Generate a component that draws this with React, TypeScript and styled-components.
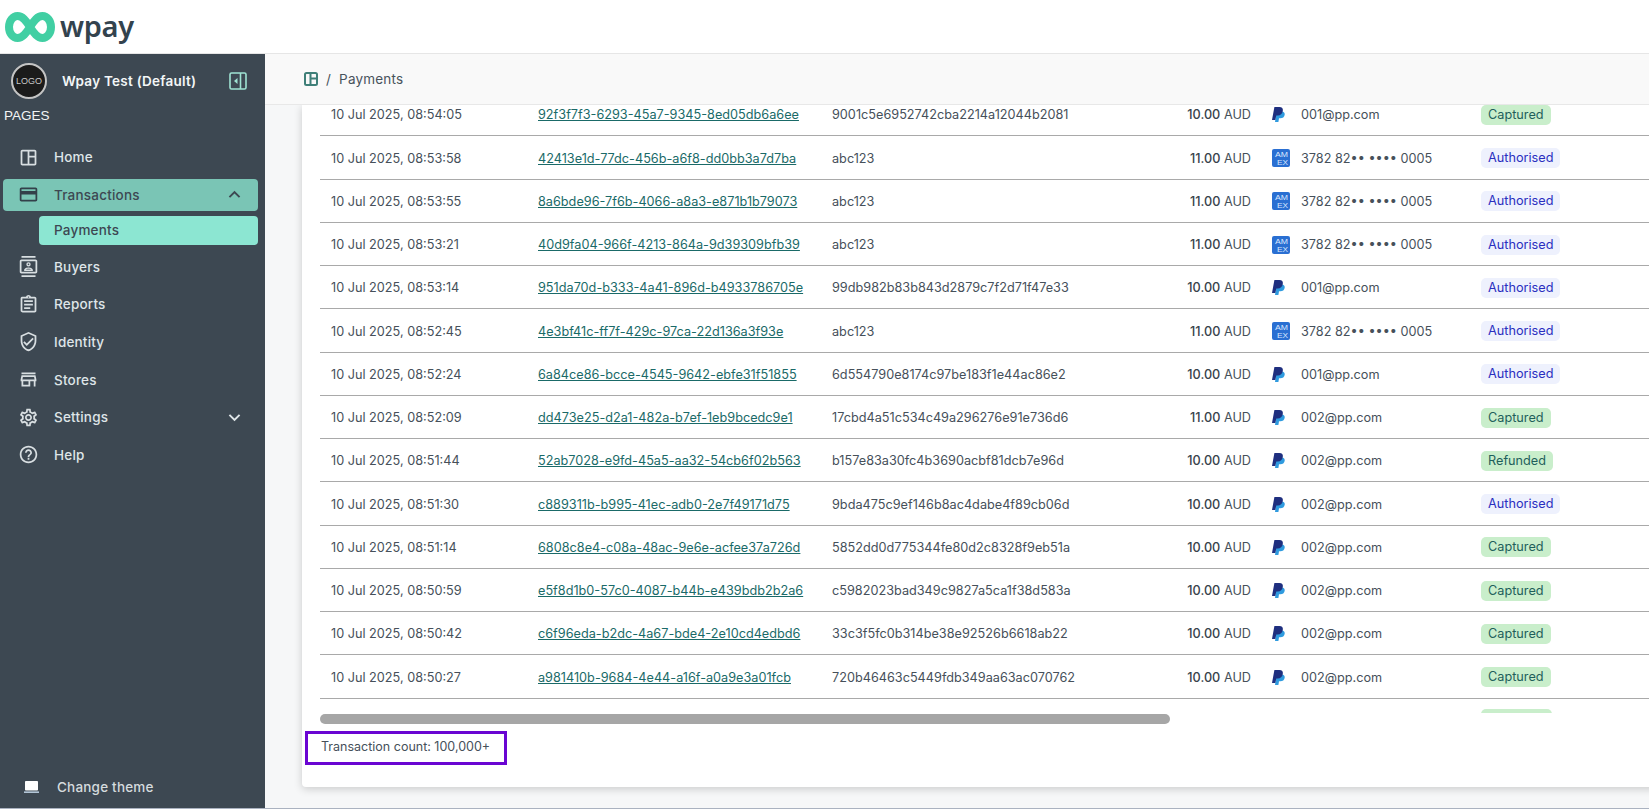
import React from "react";
import styled, { createGlobalStyle } from "styled-components";
import {
  MdOutlineSpaceDashboard,
  MdOutlineCreditCard,
  MdOutlineContacts,
  MdOutlineAssignment,
  MdOutlineVerifiedUser,
  MdOutlineStore,
  MdOutlineSettings,
  MdHelpOutline,
  MdKeyboardArrowUp,
  MdKeyboardArrowDown,
} from "react-icons/md";

const GlobalStyle = createGlobalStyle`
  html, body { margin: 0; padding: 0; height: 100%; overflow: hidden; background: #fff; }
  * { box-sizing: border-box; }
  body { font-family: "Inter", "Liberation Sans", sans-serif; }
`;

const Page = styled.div`
  width: 100vw;
  height: 100vh;
  display: flex;
  flex-direction: column;
  border-bottom: 1px solid #aab2c0;
  overflow: hidden;
`;

const TopBar = styled.header`
  height: 54px;
  flex: none;
  display: flex;
  align-items: center;
  gap: 5px;
  padding: 0 0 0 5px;
  background: #fff;
  border-bottom: 1px solid #e6e6e6;
`;

const Wordmark = styled.span`
  font-family: "Noto Sans", "Inter", sans-serif;
  font-size: 29px;
  font-weight: 600;
  letter-spacing: -0.3px;
  color: #33434e;
  line-height: 1;
  margin-top: -3px;
`;

const Body = styled.div`
  flex: 1;
  display: flex;
  min-height: 0;
`;

const Sidebar = styled.aside`
  width: 265px;
  flex: none;
  display: flex;
  flex-direction: column;
  background: #3d4852;
  padding: 9px 0 0 0;
  color: #dfe5e8;
`;

const Account = styled.div`
  display: flex;
  align-items: center;
  padding: 0 18px 0 11px;
  height: 36px;
`;

const LogoCircle = styled.div`
  width: 36px;
  height: 36px;
  flex: none;
  border-radius: 50%;
  background: #1b1b1b;
  border: 2px solid #c4c4c4;
  color: #c9c9c9;
  font-family: "Liberation Sans", sans-serif;
  font-size: 9px;
  display: flex;
  align-items: center;
  justify-content: center;
`;

const AccountName = styled.div`
  flex: 1;
  margin-left: 15px;
  font-size: 13.5px;
  font-weight: 600;
  letter-spacing: 0.25px;
  color: #f3f6f7;
  white-space: nowrap;
`;

const PagesLabel = styled.div`
  margin: 9px 0 0 4px;
  font-family: "Liberation Sans", sans-serif;
  font-size: 13.5px;
  line-height: 16px;
  color: #f2f4f5;
`;

const Nav = styled.nav`
  display: flex;
  flex-direction: column;
  gap: 5.6px;
  margin-top: 17px;
  padding: 0 7px 0 3px;
`;

const NavItem = styled.div<{ $active?: boolean }>`
  height: 32px;
  display: flex;
  align-items: center;
  padding: 0 17px 0 15px;
  border-radius: 4px;
  font-size: 13.5px;
  font-weight: 500;
  letter-spacing: 0.2px;
  background: ${(p) => (p.$active ? "#7ac5b5" : "transparent")};
  color: ${(p) => (p.$active ? "#3d4852" : "#dfe5e8")};
`;

const NavIcon = styled.span<{ $active?: boolean }>`
  width: 36px;
  flex: none;
  display: flex;
  font-size: 21px;
  color: ${(p) => (p.$active ? "#33404a" : "#d8dee1")};
`;

const NavLabel = styled.span`
  flex: 1;
`;

const Caret = styled.span`
  display: flex;
  font-size: 23px;
  margin-right: -5px;
`;

const SubItem = styled.div`
  height: 29px;
  margin-left: 36px;
  padding: 0 0 1px 15px;
  display: flex;
  align-items: center;
  border-radius: 4px;
  background: #8ce6d2;
  color: #3d4852;
  font-size: 13.5px;
  font-weight: 500;
  letter-spacing: 0.2px;
`;

const ThemeRow = styled.div`
  margin-top: auto;
  height: 42px;
  padding: 0 0 0 24px;
  display: flex;
  align-items: center;
  gap: 18px;
  font-size: 13.5px;
  font-weight: 500;
  letter-spacing: 0.2px;
  color: #d5dbde;
`;

const Main = styled.main`
  flex: 1;
  min-width: 0;
  display: flex;
  flex-direction: column;
  background: #f6f7f8;
  overflow: hidden;
`;

const Breadcrumb = styled.div`
  height: 51px;
  flex: none;
  display: flex;
  align-items: center;
  gap: 8px;
  padding-left: 39px;
  background: #f9f9f9;
  border-bottom: 1px solid #e8e8e8;
  position: relative;
  z-index: 1;
  font-size: 13.5px;
  letter-spacing: 0.2px;
  color: #48535c;
`;

const Card = styled.section`
  width: 1400px;
  height: 682px;
  flex: none;
  margin-left: 37px;
  background: #fff;
  border-radius: 0 0 4px 4px;
  box-shadow: 0 2px 8px rgba(0, 0, 0, 0.18);
`;

const TableViewport = styled.div`
  height: 608px;
  margin-left: 18px;
  overflow: hidden;
`;

const TableScroll = styled.div`
  margin-top: -12px;
`;

const Row = styled.div`
  height: 43.25px;
  padding-top: 1.5px;
  display: grid;
  grid-template-columns: 218px 294px 240px 180px 229px 1fr;
  align-items: center;
  border-bottom: 1px solid #a9a9a9;
  font-size: 12.7px;
  color: #46505a;
  white-space: nowrap;
`;

const LastRow = styled(Row)`
  border-bottom: none;
`;

const DateCell = styled.div`
  padding-left: 11px;
`;

const IdLink = styled.a`
  color: #1a6a68;
  text-decoration: underline;
`;

const Amount = styled.div`
  padding-right: 1px;
  text-align: right;
  color: #46505a;

  b {
    font-weight: 500;
    color: #39434c;
  }
`;

const Method = styled.div`
  display: flex;
  align-items: center;
  padding-left: 20px;
`;

const MethodIcon = styled.span`
  width: 29px;
  flex: none;
  display: flex;
`;

const Badge = styled.span<{ $kind: string }>`
  display: inline-block;
  height: 20px;
  line-height: 20px;
  padding: 0 7px;
  border-radius: 5px;
  background: ${(p) => (p.$kind === "Authorised" ? "#eef1fd" : "#c9eecb")};
  color: ${(p) => (p.$kind === "Authorised" ? "#2a2fc0" : "#1f5f5b")};
`;

const ClippedBadge = styled(Badge)`
  width: 71px;
`;

const ScrollTrack = styled.div`
  height: 10px;
  margin: 1px 0 0 18px;
`;

const ScrollThumb = styled.div`
  width: 850px;
  height: 10px;
  border-radius: 5px;
  background: #a6a6a6;
`;

const CountBox = styled.div`
  width: 202px;
  height: 34px;
  margin: 7px 0 0 3px;
  padding: 0 0 4px 13px;
  display: flex;
  align-items: center;
  border: 3px solid #6a05d2;
  font-size: 12.5px;
  color: #46505a;
  white-space: nowrap;
`;

const InfinityLogo = () => (
  <svg width="50" height="32" viewBox="0 0 50 32" fill="none">
    <path
      d="M25 16C21 9.500 17.500 5 12.500 5 7.800 5 4 9.800 4 16s3.800 11 8.500 11c5 0 8.500-4.500 12.500-11s7.500-11 12.500-11C42.200 5 46 9.800 46 16s-3.800 11-8.500 11c-5 0-8.500-4.500-12.500-11z"
      stroke="#41cfa3"
      strokeWidth="8"
    />
  </svg>
);

const CollapseIcon = () => (
  <svg width="18" height="18" viewBox="0 0 18 18" fill="none">
    <rect x="1" y="1" width="16" height="16" rx="1.500" stroke="#9fe3d3" strokeWidth="1.600" />
    <path d="M11.500 1v16" stroke="#9fe3d3" strokeWidth="1.600" />
    <path d="M8.500 6v6L5 9z" fill="#9fe3d3" />
  </svg>
);

const CrumbIcon = () => (
  <svg width="14" height="14" viewBox="0 0 14 14" fill="none" stroke="#3f7f78" strokeWidth="2">
    <rect x="1" y="1" width="12" height="12" rx="1.500" />
    <path d="M6.500 1v12M6.500 6.500H13" />
  </svg>
);

const LaptopIcon = () => (
  <svg width="15" height="12" viewBox="0 0 15 12">
    <rect x="1" y="0" width="13" height="9.500" rx="0.800" fill="#fff" />
    <rect x="0" y="10.500" width="15" height="1.300" fill="#cfe4f7" />
  </svg>
);

const PayPalIcon = () => (
  <svg width="13" height="15" viewBox="0 0 13 15">
    <path d="M4.500 4.500h5.200c2.200 0 3.300 1.300 3 3.200-.4 2.300-2 3.600-4.300 3.600H7L6.400 15H3z" fill="#2f9bdf" />
    <path d="M2.400 0h5C10 0 11.300 1.500 10.800 4 10.300 6.800 8.400 8.500 5.800 8.500H4.300L3.300 13H0z" fill="#1f2f7f" />
  </svg>
);

const AmexIcon = () => (
  <svg width="18" height="18" viewBox="0 0 18 18">
    <rect width="18" height="18" rx="2" fill="#2a6fd2" />
    <text x="9.500" y="8" textAnchor="middle" fontSize="8" textLength="13" lengthAdjust="spacingAndGlyphs" fill="#dbe8ff" fontFamily="Liberation Sans, sans-serif">
      AM
    </text>
    <text x="10.500" y="15.500" textAnchor="middle" fontSize="8" textLength="11" lengthAdjust="spacingAndGlyphs" fill="#dbe8ff" fontFamily="Liberation Sans, sans-serif">
      EX
    </text>
  </svg>
);

type Tx = {
  date: string;
  id: string;
  ref: string;
  amount: string;
  method: "paypal" | "amex";
  account: string;
  status: string;
};

const CARD = "3782 82•• •••• 0005";

const transactions: Tx[] = [
  { date: "10 Jul 2025, 08:54:05", id: "92f3f7f3-6293-45a7-9345-8ed05db6a6ee", ref: "9001c5e6952742cba2214a12044b2081", amount: "10.00", method: "paypal", account: "001@pp.com", status: "Captured" },
  { date: "10 Jul 2025, 08:53:58", id: "42413e1d-77dc-456b-a6f8-dd0bb3a7d7ba", ref: "abc123", amount: "11.00", method: "amex", account: CARD, status: "Authorised" },
  { date: "10 Jul 2025, 08:53:55", id: "8a6bde96-7f6b-4066-a8a3-e871b1b79073", ref: "abc123", amount: "11.00", method: "amex", account: CARD, status: "Authorised" },
  { date: "10 Jul 2025, 08:53:21", id: "40d9fa04-966f-4213-864a-9d39309bfb39", ref: "abc123", amount: "11.00", method: "amex", account: CARD, status: "Authorised" },
  { date: "10 Jul 2025, 08:53:14", id: "951da70d-b333-4a41-896d-b4933786705e", ref: "99db982b83b843d2879c7f2d71f47e33", amount: "10.00", method: "paypal", account: "001@pp.com", status: "Authorised" },
  { date: "10 Jul 2025, 08:52:45", id: "4e3bf41c-ff7f-429c-97ca-22d136a3f93e", ref: "abc123", amount: "11.00", method: "amex", account: CARD, status: "Authorised" },
  { date: "10 Jul 2025, 08:52:24", id: "6a84ce86-bcce-4545-9642-ebfe31f51855", ref: "6d554790e8174c97be183f1e44ac86e2", amount: "10.00", method: "paypal", account: "001@pp.com", status: "Authorised" },
  { date: "10 Jul 2025, 08:52:09", id: "dd473e25-d2a1-482a-b7ef-1eb9bcedc9e1", ref: "17cbd4a51c534c49a296276e91e736d6", amount: "11.00", method: "paypal", account: "002@pp.com", status: "Captured" },
  { date: "10 Jul 2025, 08:51:44", id: "52ab7028-e9fd-45a5-aa32-54cb6f02b563", ref: "b157e83a30fc4b3690acbf81dcb7e96d", amount: "10.00", method: "paypal", account: "002@pp.com", status: "Refunded" },
  { date: "10 Jul 2025, 08:51:30", id: "c889311b-b995-41ec-adb0-2e7f49171d75", ref: "9bda475c9ef146b8ac4dabe4f89cb06d", amount: "10.00", method: "paypal", account: "002@pp.com", status: "Authorised" },
  { date: "10 Jul 2025, 08:51:14", id: "6808c8e4-c08a-48ac-9e6e-acfee37a726d", ref: "5852dd0d775344fe80d2c8328f9eb51a", amount: "10.00", method: "paypal", account: "002@pp.com", status: "Captured" },
  { date: "10 Jul 2025, 08:50:59", id: "e5f8d1b0-57c0-4087-b44b-e439bdb2b2a6", ref: "c5982023bad349c9827a5ca1f38d583a", amount: "10.00", method: "paypal", account: "002@pp.com", status: "Captured" },
  { date: "10 Jul 2025, 08:50:42", id: "c6f96eda-b2dc-4a67-bde4-2e10cd4edbd6", ref: "33c3f5fc0b314be38e92526b6618ab22", amount: "10.00", method: "paypal", account: "002@pp.com", status: "Captured" },
  { date: "10 Jul 2025, 08:50:27", id: "a981410b-9684-4e44-a16f-a0a9e3a01fcb", ref: "720b46463c5449fdb349aa63ac070762", amount: "10.00", method: "paypal", account: "002@pp.com", status: "Captured" },
];

export default function App() {
  return (
    <>
      <GlobalStyle />
      <Page>
        <TopBar>
          <InfinityLogo />
          <Wordmark>wpay</Wordmark>
        </TopBar>
        <Body>
          <Sidebar>
            <Account>
              <LogoCircle>LOGO</LogoCircle>
              <AccountName>Wpay Test (Default)</AccountName>
              <CollapseIcon />
            </Account>
            <PagesLabel>PAGES</PagesLabel>
            <Nav>
              <NavItem>
                <NavIcon><MdOutlineSpaceDashboard /></NavIcon>
                <NavLabel>Home</NavLabel>
              </NavItem>
              <NavItem $active>
                <NavIcon $active><MdOutlineCreditCard /></NavIcon>
                <NavLabel>Transactions</NavLabel>
                <Caret><MdKeyboardArrowUp /></Caret>
              </NavItem>
              <SubItem>Payments</SubItem>
              <NavItem>
                <NavIcon><MdOutlineContacts /></NavIcon>
                <NavLabel>Buyers</NavLabel>
              </NavItem>
              <NavItem>
                <NavIcon><MdOutlineAssignment /></NavIcon>
                <NavLabel>Reports</NavLabel>
              </NavItem>
              <NavItem>
                <NavIcon><MdOutlineVerifiedUser /></NavIcon>
                <NavLabel>Identity</NavLabel>
              </NavItem>
              <NavItem>
                <NavIcon><MdOutlineStore /></NavIcon>
                <NavLabel>Stores</NavLabel>
              </NavItem>
              <NavItem>
                <NavIcon><MdOutlineSettings /></NavIcon>
                <NavLabel>Settings</NavLabel>
                <Caret><MdKeyboardArrowDown /></Caret>
              </NavItem>
              <NavItem>
                <NavIcon><MdHelpOutline /></NavIcon>
                <NavLabel>Help</NavLabel>
              </NavItem>
            </Nav>
            <ThemeRow>
              <LaptopIcon />
              Change theme
            </ThemeRow>
          </Sidebar>
          <Main>
            <Breadcrumb>
              <CrumbIcon />
              <span>/</span>
              <span>Payments</span>
            </Breadcrumb>
            <Card>
              <TableViewport>
                <TableScroll>
                  {transactions.map((t) => (
                    <Row key={t.id}>
                      <DateCell>{t.date}</DateCell>
                      <div><IdLink href="#">{t.id}</IdLink></div>
                      <div>{t.ref}</div>
                      <Amount><b>{t.amount}</b> AUD</Amount>
                      <Method>
                        <MethodIcon>{t.method === "paypal" ? <PayPalIcon /> : <AmexIcon />}</MethodIcon>
                        {t.account}
                      </Method>
                      <div><Badge $kind={t.status}>{t.status}</Badge></div>
                    </Row>
                  ))}
                  <LastRow>
                    <div />
                    <div />
                    <div />
                    <div />
                    <Method><MethodIcon><PayPalIcon /></MethodIcon></Method>
                    <div><ClippedBadge $kind="Captured" /></div>
                  </LastRow>
                </TableScroll>
              </TableViewport>
              <ScrollTrack><ScrollThumb /></ScrollTrack>
              <CountBox>Transaction count: 100,000+</CountBox>
            </Card>
          </Main>
        </Body>
      </Page>
    </>
  );
}
